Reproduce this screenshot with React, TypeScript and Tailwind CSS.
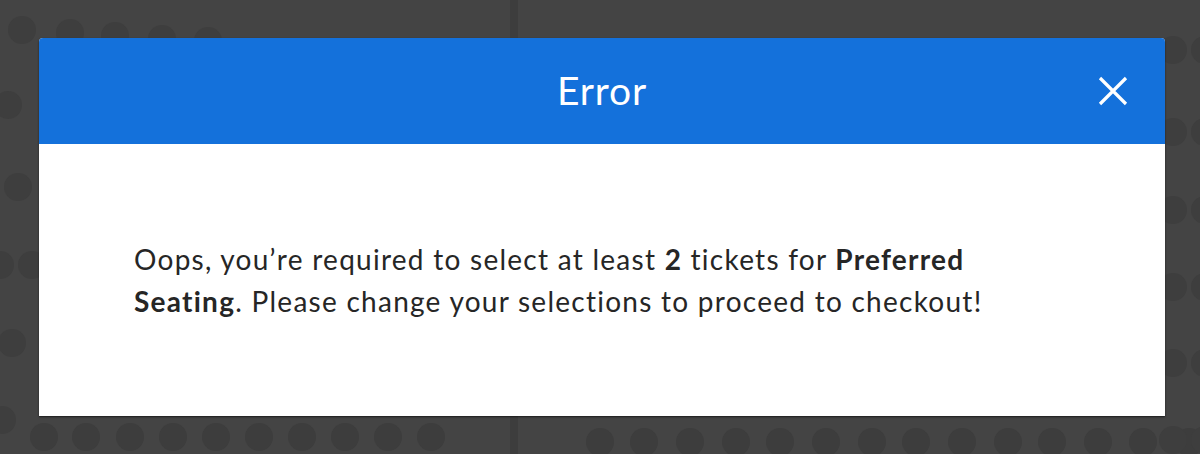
import React from "react";

const topRow = [
  [22, 30], [70, 33], [115, 36], [162, 39], [208, 41],
];
const leftCol = [
  [8, 105], [18, 187], [0, 265], [32, 265], [12, 343], [2, 420],
];
const bottomLeft = [44, 86, 130, 173, 216, 259, 302, 345, 388, 431];
const bottomRight = [600, 644, 690, 736, 780, 826, 872, 916, 962, 1008, 1052, 1098, 1143, 1189];
const rightYs = [50, 132, 210, 287, 363, 440];

function SeatMap() {
  return (
    <svg className="absolute inset-0" width={1200} height={454} viewBox="0 0 1200 454">
      <rect x={510} y={0} width={8} height={454} fill="#3d3d3d" />
      {topRow.map(([x, y], i) => (
        <circle key={"t" + i} cx={x} cy={y} r={14} fill="#3e3e3e" />
      ))}
      {leftCol.map(([x, y], i) => (
        <circle key={"l" + i} cx={x} cy={y} r={14} fill="#3e3e3e" />
      ))}
      {bottomLeft.map((x, i) => (
        <circle key={"bl" + i} cx={x} cy={437} r={14} fill="#3d3d3d" />
      ))}
      {bottomRight.map((x, i) => (
        <circle key={"br" + i} cx={x} cy={442} r={14} fill="#3d3d3d" />
      ))}
      {rightYs.map((y, i) => (
        <circle key={"r" + i} cx={1173} cy={y} r={14} fill="#3e3e3e" />
      ))}
      {rightYs.map((y, i) => (
        <circle key={"r2" + i} cx={1205} cy={y} r={14} fill="#3e3e3e" />
      ))}
    </svg>
  );
}

export default function App() {
  return (
    <div
      className="relative h-[454px] w-[1200px] overflow-hidden bg-[#444444] pl-[39px] pt-[38px]"
      style={{ fontFamily: "Lato, 'Noto Sans', sans-serif" }}
    >
      <SeatMap />
      <div className="relative flex h-[378px] w-[1126px] flex-col overflow-hidden rounded-t-[4px] bg-white shadow-[0_1px_2px_rgba(0,0,0,0.6)]">
        <div className="relative flex h-[106px] items-center justify-center bg-[#1471db]">
          <span className="pb-[2px] text-[39px] leading-none tracking-[0.02em] text-white">Error</span>
          <button className="absolute right-[37px] top-[38px] flex h-[30px] w-[30px] items-center justify-center">
            <svg width="30" height="30" viewBox="0 0 30 30">
              <path d="M2 2 L28 28 M28 2 L2 28" stroke="#ffffff" strokeWidth="3.2" strokeLinecap="butt" />
            </svg>
          </button>
        </div>
        <div className="flex flex-1 items-center pl-[95px] pr-[40px]">
          <p className="whitespace-nowrap text-[28px] leading-[42px] tracking-[0.045em] text-[#262626]">
            Oops, you’re required to select at least <b className="font-bold">2</b> tickets for{" "}
            <b className="font-bold">Preferred</b>
            <br />
            <b className="font-bold">Seating</b>. Please change your selections to proceed to checkout!
          </p>
        </div>
      </div>
    </div>
  );
}
